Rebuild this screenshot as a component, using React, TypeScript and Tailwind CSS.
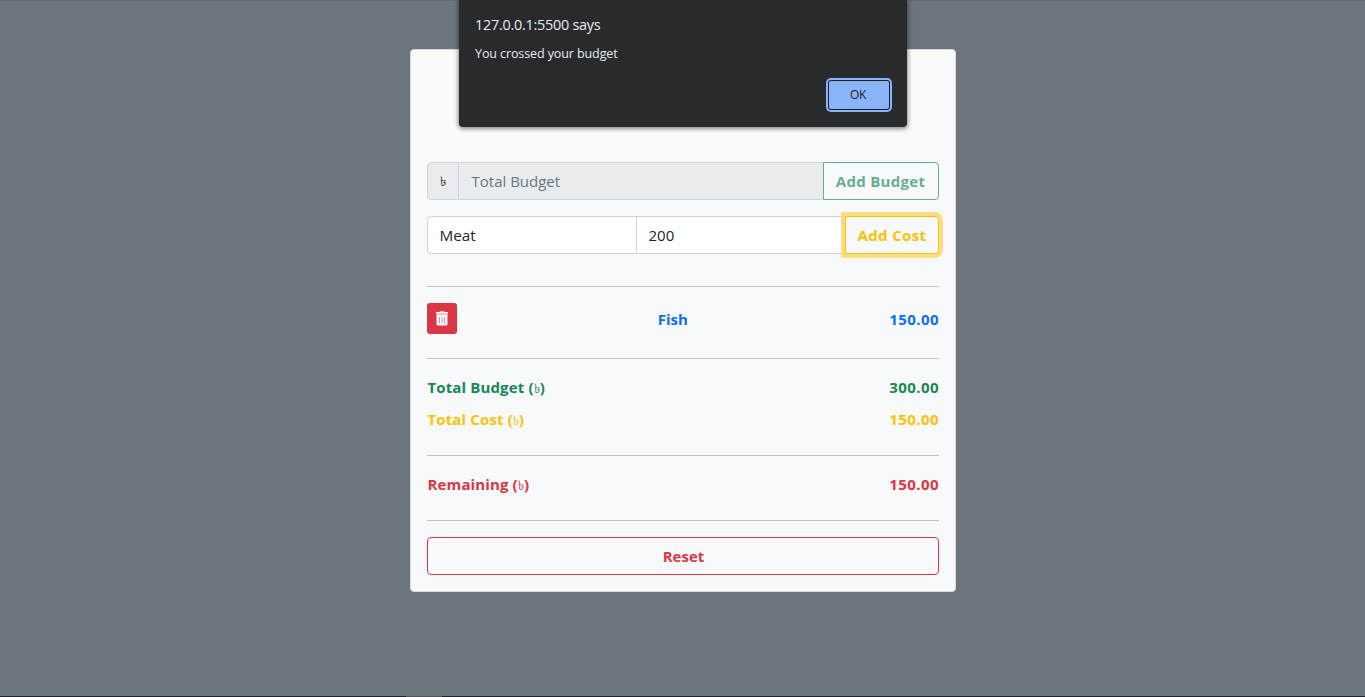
import type { ReactNode } from "react";

const TAKA = "\u09F3";

function Taka({ className = "" }: { className?: string }) {
  return <span className={`font-normal ${className}`}>{TAKA}</span>;
}

function Rule() {
  return <hr className="h-px shrink-0 border-0 bg-[#bfc1c3]" />;
}

function SummaryRow({ label, value, tone }: { label: string; value: string; tone: string }) {
  return (
    <div className={`flex h-6 items-center justify-between pl-px font-bold ${tone}`}>
      <span className="tracking-[0.13px]">
        {label} (<Taka className="text-[13px]" />)
      </span>
      <Amount>{value}</Amount>
    </div>
  );
}

function Amount({ children }: { children: ReactNode }) {
  return <span className="-mr-[0.5px] tracking-[0.45px]">{children}</span>;
}

function TrashIcon() {
  return (
    <svg width="14" height="15" viewBox="0 0 14 15" fill="none">
      <path d="M5 .2h4L9.600 1H13v1.800H1V1h3.400z" fill="#fff" />
      <path d="M1.500 2.800h11V13a1.500 1.500 0 0 1-1.500 1.500H3A1.500 1.500 0 0 1 1.500 13z" fill="#fff" />
      <path d="M1.500 3.300h11" stroke="#eda0a8" strokeWidth="1" />
      <path d="M4.500 6v6.500M7 6v6.500M9.500 6v6.500" stroke="#e88791" strokeWidth="1" />
    </svg>
  );
}

function AlertDialog() {
  return (
    <div
      role="alertdialog"
      className="absolute top-0 left-[459px] flex h-[127px] w-[448px] flex-col rounded-b-[4px] bg-[#292a2d] px-4 pt-[14px] text-[#e8eaed] shadow-[0_1px_4px_1px_rgba(0,0,0,0.45)]"
    >
      <h2 className="text-[14.4px] leading-[22px] tracking-[-0.25px]">127.0.0.1:5500 says</h2>
      <p className="mt-[8px] text-[12.5px] leading-[20px] tracking-[-0.1px]">You crossed your budget</p>
      <button className="mt-[17px] mr-[2px] h-[28px] w-[60px] self-end rounded-[2px] bg-[#8ab4f8] pr-[2px] text-[12px] tracking-[-0.3px] text-[#202124] shadow-[0_0_0_1px_#202124,0_0_0_3px_#8ab4f8]">
        OK
      </button>
    </div>
  );
}

export default function App() {
  return (
    <div className="relative flex h-[697px] w-[1365px] flex-col overflow-hidden bg-[#6c757d] font-['Open_Sans','Noto_Sans',sans-serif] text-[15px]">
      <div className="h-px shrink-0 bg-[#66686b]" />
      <main className="mx-auto mt-12 flex h-[543px] w-[546px] flex-col rounded-[4px] border border-[#d8dadc] bg-[#f8f9fa] px-4 pt-[112px]">
        <div className="flex h-[38px] shrink-0 text-[#6c757d]">
          <span className="flex w-8 items-center justify-center rounded-l-[4px] border border-[#ced4da] bg-[#e9ecef] pt-[2px] text-[13px] text-[#212529]">
            <Taka />
          </span>
          <span className="flex flex-1 items-center border-y border-[#ced4da] bg-[#e9ecef] pl-[13px]">Total Budget</span>
          <button className="w-[116px] rounded-r-[4px] border border-[#198754] font-bold tracking-[0.3px] text-[#198754] opacity-65">
            Add Budget
          </button>
        </div>
        <div className="mt-4 flex h-[38px] shrink-0 text-[#212529]">
          <span className="flex w-[209px] items-center rounded-l-[4px] border border-r-0 border-[#ced4da] bg-white pl-3 text-[15.3px]">
            Meat
          </span>
          <span className="flex flex-1 items-center border border-r-0 border-[#ced4da] bg-white pl-3">200</span>
          <button className="w-[94px] rounded-r-[4px] border border-[#ffc107] bg-[#f8f9fa] pl-px font-bold tracking-[0.35px] text-[#ffc107] shadow-[0_0_0_4px_#fddd80]">
            Add Cost
          </button>
        </div>
        <div className="h-8 shrink-0" />
        <Rule />
        <div className="mt-4 flex h-[31px] shrink-0 items-center justify-between font-bold text-[#0d6efd]">
          <button className="flex h-[31px] w-[30px] items-center justify-center rounded-[3px] bg-[#dc3545]">
            <TrashIcon />
          </button>
          <span className="pt-[2px]">Fish</span>
          <span className="pt-[2px]">
            <Amount>150.00</Amount>
          </span>
        </div>
        <div className="h-6 shrink-0" />
        <Rule />
        <div className="flex flex-col gap-2 pt-4 pb-[24px]">
          <SummaryRow label="Total Budget" value="300.00" tone="text-[#198754]" />
          <SummaryRow label="Total Cost" value="150.00" tone="text-[#ffc107]" />
        </div>
        <Rule />
        <div className="pt-4 pb-6">
          <SummaryRow label="Remaining" value="150.00" tone="text-[#dc3545]" />
        </div>
        <Rule />
        <button className="mt-4 h-[38px] shrink-0 rounded-[4px] border border-[#dc3545] pl-[2px] font-bold text-[#dc3545]">
          Reset
        </button>
      </main>
      <div className="mt-auto h-px shrink-0 bg-[#24222b]">
        <div className="ml-[406px] h-px w-9 bg-[#55545b]" />
      </div>
      <AlertDialog />
    </div>
  );
}
